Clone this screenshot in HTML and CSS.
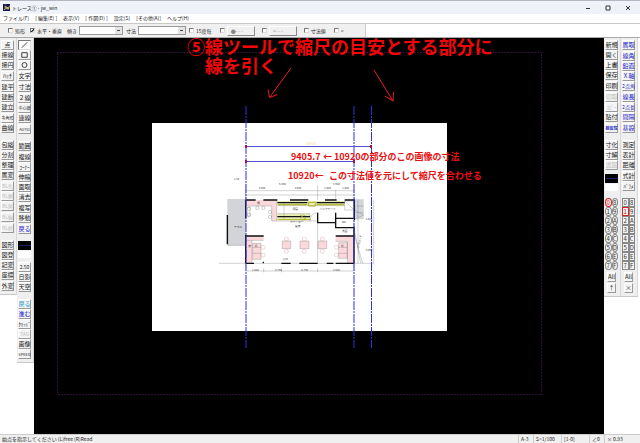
FILE: index.html
```html
<!DOCTYPE html>
<html lang="ja">
<head>
<meta charset="utf-8">
<title>トレース① - jw_win</title>
<link rel="stylesheet" href="styles.css">
</head>
<body>
<header class="titlebar">
  <svg class="logo" viewBox="0 0 16 16" aria-hidden="true"><rect width="16" height="16" fill="#14145c"/><path d="M5 4v7q0 2-3 2M5 1v1M7 5l2 7 2-5 1 5 3-8" fill="none" stroke="#e8dc58" stroke-width="2"/></svg>
  <span class="title">トレース① - jw_win</span>
  <div class="winbtns">
    <button aria-label="最小化"><svg viewBox="0 0 6 6"><path d="M1 3.500h4"/></svg></button>
    <button aria-label="最大化"><svg viewBox="0 0 6 6"><path d="M1 1h4v4h-4z"/></svg></button>
    <button aria-label="閉じる"><svg viewBox="0 0 6 6"><path d="M1 1l4 4M5 1l-4 4"/></svg></button>
  </div>
</header>
<nav class="menu">
  <a href="#">ファイル(F)</a><a href="#">[ 編集(E) ]</a><a href="#">表示(V)</a><a href="#">[ 作図(D) ]</a><a href="#">設定(S)</a><a href="#">[その他(A)]</a><a href="#">ヘルプ(H)</a>
</nav>
<div class="optionbar">
  <div class="options">
    <label><input type="checkbox">矩形</label>
    <label><input type="checkbox" checked>水平・垂直</label>
    <label class="combo">傾き<select><option></option></select></label>
    <label class="combo wide">寸法<select><option></option></select></label>
    <label class="near"><input type="checkbox">15度毎</label>
    <div class="pair"><input type="checkbox" aria-label="端点"><button>●- - -</button></div>
    <div class="pair"><input type="checkbox" aria-label="矢印"><button>&lt;- - -</button></div>
    <label class="near"><input type="checkbox">寸法値</label>
    <label><input type="checkbox">&lt;</label>
  </div>
</div>
<main class="work">
  <aside class="side">
    <div class="col">
      <div class="group"><button>点</button><button>接線</button><button>接円</button></div>
      <div class="group"><button>ﾊｯﾁ</button></div>
      <div class="group"><button>建平</button><button>建断</button><button>建立</button></div>
      <div class="group"><button class="tiny">多角形</button><button>曲線</button></div>
      <div class="group major"><button>包絡</button><button>分割</button><button>整理</button><button>属変</button></div>
      <div class="group"><button class="kana" disabled>BL化</button><button class="kana" disabled>BL解</button><button class="kana" disabled>BL属</button></div>
      <div class="group"><button class="kana" disabled>BL編</button></div>
      <div class="group"><button class="kana" disabled>BL終</button></div>
      <div class="group major"><button>図形</button><button>図登</button><button>記変</button><button>座標</button></div>
      <div class="group"><button>外変</button></div>
    </div>
    <div class="col">
      <div class="group">
        <button class="on" aria-label="線"><svg viewBox="0 0 12 8"><path d="M3 7l6-6"/></svg></button>
        <button aria-label="矩形"><svg viewBox="0 0 12 8"><path d="M3 1.500h6v5h-6z"/></svg></button>
        <button aria-label="円"><svg viewBox="0 0 12 8"><circle cx="6" cy="4" r="2.700"/></svg></button>
      </div>
      <div class="group"><button>文字</button></div>
      <div class="group"><button>寸法</button></div>
      <div class="group"><button>２線</button><button class="tiny">中心線</button><button>連線</button></div>
      <div class="group"><button class="tiny">AUTO</button></div>
      <div class="group major"><button>範囲</button></div>
      <div class="group"><button>複線</button><button class="kana">ｺｰﾅｰ</button><button>伸縮</button><button>面取</button><button>消去</button></div>
      <div class="group"><button>複写</button><button>移動</button></div>
      <div class="group"><button class="blue">戻る</button></div>
      <div class="group major swatch"></div>
      <div class="group blank"></div>
      <div class="group third"><button class="kana">2.50</button><button>日影</button><button>天空</button></div>
      <div class="group major"><button class="sky">戻る</button><button class="blue">進む</button><button class="kana">ｸﾘｯﾄﾞ</button><button class="kana" disabled>TAG</button><button>画像</button><button class="tiny">SPEED</button></div>
    </div>
  </aside>

  <svg class="drawing" viewBox="34 38 570 396" role="img" aria-label="平面図">
    <rect x="152" y="123" width="295" height="208" fill="#fff"/>
    <path class="frame" d="M57.500 52.500H541.500V394.500H57.500z"/>
    <g transform="translate(210 170) scale(.33333)">
      <path fill="#d2d4d7" d="M52 87h54v139h-54zM433 88h28v60h-28z"/>
      <path fill="#fbd9db" d="M107 90h93v63h-15v-45h-78zM107 197h54v14h-35v69h-19zM128 220h25v48h-25zM377 197h55v83h-20v-66h-35zM386 218h26v47h-26zM217 213h25v23h-25zM270 213h27v23h-27zM324 213h26v23h-26z"/>
      <path fill="#e6ecb4" d="M202 93h202v14h-202zM202 131h98v18h-98z"/>
      <g class="thin">
        <path d="M54 226h53M107 300V62H432V303M27 280h464M107 303h325M161 295v12M215 295v12M323 295v12M323 45v45M377 60v30M107 75h325M444 88v192M491 90v190M485 80v230M107 90v-50M54 135v91"/>
        <path d="M200 90v63M200 153h122M185 108v45h15M107 108h78M107 211h54M128 220h25v48h-25zM128 232h25M128 250h25M126 211v69M412 214v66M377 214h35M386 218h26v47h-26zM386 232h26M386 250h26M217 213h25v23h-25zM270 213h27v23h-27zM324 213h26v23h-26zM323 158v122M404 93h28v27h-28zM404 93l28 27M222 96v53M300 155q0-25 22-27M433 120l28 15-28 13M432 172l20 108M432 190l26 90"/>
        <path d="M112 112h8v28h-8zM202 107h202M202 131h98v18M440 108h21M437 128h23"/>
        <g>
          <circle cx="142" cy="114" r="5"/><circle cx="160" cy="114" r="5"/><circle cx="117" cy="116" r="5"/><circle cx="117" cy="134" r="5"/><circle cx="180" cy="126" r="5"/><circle cx="180" cy="141" r="5"/>
        </g>
        <g class="seats">
          <circle cx="159" cy="232" r="6"/><circle cx="159" cy="255" r="6"/><circle cx="379" cy="232" r="6"/><circle cx="379" cy="255" r="6"/>
          <circle cx="229" cy="207" r="6"/><circle cx="229" cy="244" r="6"/><circle cx="283" cy="207" r="6"/><circle cx="283" cy="244" r="6"/><circle cx="337" cy="207" r="6"/><circle cx="337" cy="244" r="6"/>
        </g>
        <circle cx="279" cy="143" r="8"/>
      </g>
      <path class="wall" d="M107 90h30M160 90h42M240 90h55M345 90h35M404 90h29V150M432 170v110M107 90v55M107 195v85M107 280h25M160 280v-5M214 280h28M268 280h55M350 280h20M377 280h55M107 198h54M377 198h55M323 128v30h55M377 128v17h55M377 145v28h28M52 135v88M202 98h90M320 98h84M202 140h98M405 173h27"/>
      <path fill="none" stroke="#afb51c" stroke-width="3" d="M204 104h88M320 104h82M203 149h98M296 97h20v11h-20zM270 134l18 16"/>
      <g class="dims">
        <text x="72" y="30">1.30</text><text x="207" y="44">5.460</text><text x="369" y="44">3.640</text>
        <text x="146" y="58">3.640</text><text x="254" y="58">3.640</text><text x="343" y="58">1.820</text><text x="397" y="58">1.820</text>
        <text x="126" y="304">1.820</text><text x="195" y="304">2.730</text><text x="274" y="304">2.730</text><text x="369" y="304">3.640</text>
        <text x="248" y="121">厨房</text><text x="329" y="121">バックヤード</text><text x="72" y="174">テラス</text><text x="240" y="159">カウンター</text><text x="255" y="171">客席</text><text x="396" y="159">WC</text><text x="396" y="186">洗面</text><text x="467" y="150">1.820</text><text x="467" y="243">5.460</text><text x="218" y="269">入口</text><text x="142" y="102">棚</text>
        <text x="115" y="232">席</text><text x="134" y="232">机</text><text x="393" y="232">机</text><text transform="translate(448 235) rotate(-80)">アプローチ</text>
      </g>
    </g>
    <path class="guide" d="M246 106V348M354 106V348M371.500 106V348"/>
    <path class="measure" d="M246 146.500H371M246 161.500H354"/>
    <path fill="#b01040" d="M245 145h2v3h-2zM370 145h2v3h-2zM245 160h2v3h-2zM353 160h2v3h-2z"/>
    <text class="faint" x="305" y="145">10920</text>
    <path class="arrow" d="M291 68L269.500 97.500M268 89.500L269.500 97.500L277.500 94.500M374 70L393 101M385 96L393 101L393.500 92"/>
    <g class="headline"><text x="187" y="54">⑤線ツールで縮尺の目安とする部分に</text><text x="205" y="73">線を引く</text></g>
    <g class="note"><text x="291" y="160">9405.7</text><text x="323" y="160">←</text><text x="334" y="160">10920の部分のこの画像の寸法</text><text x="288" y="179">10920←</text><text x="329" y="179">この寸法値を元にして縮尺を合わせる</text></g>
  </svg>

  <aside class="side right">
    <div class="col">
      <div class="group"><button>新規</button><button>開く</button><button>上書</button><button>保存</button></div>
      <div class="group"><button>印刷</button></div>
      <div class="group"><button disabled>切取</button><button class="kana" disabled>ｺﾋﾟｰ</button><button>貼付</button></div>
      <div class="group"><button class="blue strong tiny">線属性</button></div>
      <div class="group major"><button>寸化</button><button>寸解</button><button disabled>選図</button></div>
      <div class="group third swatch"></div>
      <div class="group blank"></div>
      <div class="layers round major">
        <button class="current">0</button><button>8</button><button>1</button><button>9</button><button>2</button><button>A</button><button>3</button><button>B</button><button>4</button><button>C</button><button>5</button><button>D</button><button>6</button><button>E</button><button>7</button><button>F</button>
      </div>
      <div class="group short"><button>All</button></div>
      <div class="group short"><button>↑</button></div>
    </div>
    <div class="col">
      <div class="group bluegroup"><button>属取</button></div>
      <div class="group bluegroup"><button>線角</button><button>鉛直</button><button>Ｘ軸</button><button class="kana">2点角</button></div>
      <div class="group bluegroup"><button>線長</button><button class="kana">2点長</button><button>間隔</button></div>
      <div class="group bluegroup"><button>基設</button></div>
      <div class="group major"><button>測定</button><button>表計</button><button>距離</button></div>
      <div class="group"><button>式計</button><button class="kana">ﾊﾟﾗﾒ</button></div>
      <div class="layers major">
        <button>0</button><button>8</button><button class="current">1</button><button>9</button><button>2</button><button>A</button><button>3</button><button>B</button><button>4</button><button>C</button><button>5</button><button>D</button><button>6</button><button>E</button><button>7</button><button>F</button>
      </div>
      <div class="group short"><button>All</button></div>
      <div class="group short"><button aria-label="反転"><svg viewBox="0 0 12 8"><path d="M3 1l3 3-3 3M9 1L6 4l3 3"/></svg></button></div>
    </div>
  </aside>
</main>
<footer class="status">
  <span class="message">始点を指示してください (L)free (R)Read</span>
  <span class="cell">A-3</span><span class="cell scale">S=1/100</span><span class="cell scale">[1-0]</span><span class="cell">∠0</span><span class="cell zoom">× 0.93</span>
</footer>
</body>
</html>
```
FILE: styles.css
```css
* { box-sizing: border-box; }

body {
  margin: 0;
  min-height: 100vh;
  display: flex;
  flex-direction: column;
  background: #fff;
  color: #222;
  font: 5px/8px "Noto Sans CJK JP", "Noto Sans", sans-serif;
}

button, select, input { margin: 0; padding: 0; font: inherit; color: inherit; }
button { border: 0; background: none; white-space: nowrap; }

.titlebar {
  height: 14px;
  display: flex;
  align-items: center;
  gap: 2px;
  padding-left: 3px;
  background: #f0f2fa;
  border-top: 1px solid #b4b6c2;
}
.logo { width: 7px; height: 7px; }
.winbtns { margin-left: auto; display: flex; padding-right: 2px; }
.winbtns button { width: 20px; height: 10px; display: grid; place-items: center; }
.winbtns svg { width: 6px; height: 6px; fill: none; stroke: #333; stroke-width: 1; }

.menu { height: 9px; display: flex; gap: 6px; padding-left: 3px; }
.menu a { color: #222; text-decoration: none; white-space: nowrap; }

.optionbar {
  height: 15px;
  display: flex;
  border-top: 1px solid #c8c8c8;
  border-bottom: 1px solid #a8a8a8;
}
.options {
  display: flex;
  align-items: center;
  gap: 5px;
  padding: 0 22px 0 8px;
  background: #f0f0f0;
  border-right: 1px solid #ccc;
  white-space: nowrap;
}
.options label, .pair { display: flex; align-items: center; gap: 2px; }
.options .combo { margin-right: -2px; }
.options .pair { margin-right: 2px; }
.options .near { margin-right: 3px; }
.options input {
  appearance: none;
  width: 5px;
  height: 5px;
  background: #fff;
  border: 1px solid #ddd;
  border-top-color: #777;
  border-left-color: #777;
}
.options input:checked { background: linear-gradient(135deg, #fff 30%, #222 50%, #fff 90%); }
.options select {
  appearance: none;
  width: 44px;
  height: 9px;
  border: 1px solid #999;
  border-radius: 0;
  background: linear-gradient(#444, #444) right 2px center / 3px 1px no-repeat, linear-gradient(#e4e4e4, #e4e4e4) right / 7px 100% no-repeat, #fff;
}
.options .wide select { width: 48px; }
.pair button {
  width: 28px;
  height: 10px;
  color: #888;
  line-height: 8px;
  border: 1px solid #fff;
  border-right-color: #888;
  border-bottom-color: #888;
  text-align: left;
  padding-left: 3px;
}

.work { flex: 1; display: flex; background: #fff; }
.side { display: flex; align-items: flex-start; flex: none; }
.right { padding-right: 2px; }
.col {
  width: 17px;
  padding: 2px 2px 3px 1px;
  background: #efefef;
  border-right: 1px solid #d8d8d8;
  border-bottom: 1px solid #c8c8c8;
}
.group { display: flex; flex-direction: column; margin-top: 1px; }
.group:first-child { margin-top: 0; }
.col > .major { margin-top: 7px; }
.col > .third { margin-top: 4px; }
.group button {
  height: 10px;
  display: flex;
  align-items: center;
  justify-content: center;
  font-size: 6px;
  line-height: 8px;
  background: #f4f4f4;
  border: 1px solid #fff;
  border-right-color: #999;
  border-bottom-color: #999;
}
.group .kana { font-size: 5px; }
.group .tiny { font-size: 4px; }
.group button:disabled { color: #c0c0c0; }
.group .on { background: #fff; border-color: #777 #ddd #ddd #777; }
.group svg { width: 100%; height: 8px; fill: none; stroke: #333; stroke-width: 1; }
.group .blue, .bluegroup button { color: #2424c8; }
.group .strong { font-weight: bold; }
.group .sky { color: #299bd0; }
.swatch { height: 9px; background: linear-gradient(#202068, #202068) center / 12px 1px no-repeat, #000; }
.blank { height: 7px; background: #fff; }
.short { padding: 0 2px; }

.layers { display: grid; grid-template-columns: 1fr 1fr; margin-bottom: 2px; }
.layers button {
  height: 9px;
  border: 1px solid #888;
  background: #f2f2f2;
  color: #333;
  font-size: 6px;
  line-height: 7px;
}
.round button { border-radius: 50%; }
.layers .current { border-color: #e02020; color: #c01010; }

.drawing { flex: 1; min-width: 0; overflow: visible; background: #000; }
.frame { fill: none; stroke: #5c2470; stroke-width: 1; stroke-dasharray: 1 2; }
.thin { fill: none; stroke: #777; stroke-width: 1; }
.seats { stroke: #d08a90; }
.wall { fill: none; stroke: #111; stroke-width: 4; }
.dims { font-size: 8px; fill: #333; }
.guide { fill: none; stroke: #3030e0; stroke-width: 1; stroke-dasharray: 9 1 2 1; }
.measure { fill: none; stroke: #5050d0; stroke-width: 1; }
.faint { font-size: 4px; fill: #f4d8a0; }
.arrow { fill: none; stroke: #f01c24; stroke-width: 1; }
.headline { font-size: 18px; font-weight: bold; fill: #f00808; }
.note { font-size: 9px; font-weight: bold; fill: #e81010; }

.status {
  height: 9px;
  display: flex;
  align-items: center;
  padding: 0 10px 0 2px;
  background: #f0f0f0;
  border-top: 1px solid #ccc;
  white-space: nowrap;
}
.message { margin-right: auto; }
.cell { width: 15px; padding-left: 2px; border-left: 1px solid #ccc; }
.scale { width: 28px; }
.zoom { width: 26px; }
```
